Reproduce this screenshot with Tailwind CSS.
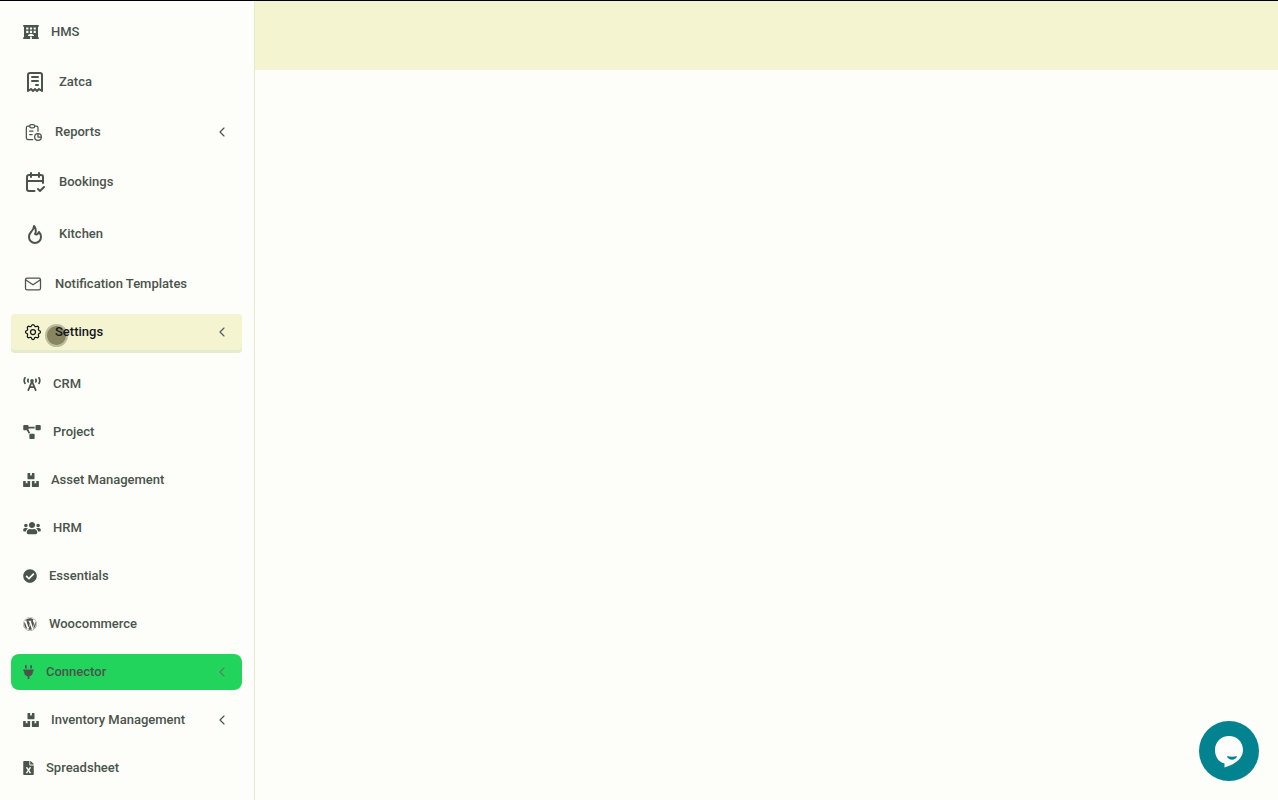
<!DOCTYPE html>
<html lang="en">
<head>
  <meta charset="UTF-8">
  <meta name="viewport" content="width=device-width, initial-scale=1">
  <title>Dashboard</title>
  <script src="https://cdn.jsdelivr.net/npm/@tailwindcss/browser@4"></script>
</head>
<body class="flex min-h-screen border-t border-black bg-[#fdfdf9] font-['Roboto',sans-serif]">
  <!-- Shared icons -->
  <svg class="hidden">
    <symbol id="boxes" viewBox="0 0 576 512"><path d="M560 288h-80v96l-32-21.3-32 21.3v-96h-80c-8.8 0-16 7.2-16 16v192c0 8.8 7.2 16 16 16h224c8.8 0 16-7.2 16-16V304c0-8.8-7.2-16-16-16zm-384-64h224c8.8 0 16-7.2 16-16V16c0-8.8-7.2-16-16-16h-80v96l-32-21.3L256 96V0h-80c-8.8 0-16 7.2-16 16v192c0 8.8 7.2 16 16 16zm64 64h-80v96l-32-21.3L96 384v-96H16c-8.8 0-16 7.2-16 16v192c0 8.8 7.2 16 16 16h224c8.8 0 16-7.2 16-16V304c0-8.8-7.2-16-16-16z"/></symbol>
    <symbol id="chevron" viewBox="0 0 24 24"><path d="M15 6l-6 6 6 6" fill="none" stroke="currentColor" stroke-width="1.75" stroke-linecap="round" stroke-linejoin="round"/></symbol>
  </svg>

  <!-- Sidebar -->
  <aside class="w-[255px] shrink-0 border-r border-[#e4eccb] pt-[13px] pr-3 pb-3 pl-[11px]">
    <nav class="flex flex-col gap-3 text-[13px] leading-5 font-medium text-[#4a544c]">
      <a href="#" class="flex items-center gap-3 rounded-lg px-3 py-2">
        <svg class="h-3.5 w-4" viewBox="0 0 576 512" fill="currentColor" fill-rule="evenodd"><path d="M16 0h544q16 0 16 16v32q0 16-16 16h-16v384h16q16 0 16 16v32q0 16-16 16H320v-80q0-16-16-16h-32q-16 0-16 16v80H16q-16 0-16-16v-32q0-16 16-16h16V64H16Q0 64 0 48V16Q0 0 16 0zM112 88v80h80V88zm136 0v80h80V88zm136 0v80h80V88zM112 208v80h80v-80zm136 0v80h80v-80zm136 0v80h80v-80zM176 400h224c0-50-50-84-112-84s-112 34-112 84z"/></svg>
        <span>HMS</span>
      </a>
      <a href="#" class="flex items-center gap-3 rounded-lg px-3 py-2">
        <svg class="size-6" viewBox="0 0 24 24" fill="none" stroke="currentColor" stroke-width="2" stroke-linecap="round" stroke-linejoin="round"><path d="M5 21V5a2 2 0 0 1 2-2h10a2 2 0 0 1 2 2v16l-3-2-2 2-2-2-2 2-2-2-3 2M9 7h6M9 11h6M13 15h2"/></svg>
        <span>Zatca</span>
      </a>
      <a href="#" class="flex items-center gap-3 rounded-lg px-3 py-2">
        <svg class="size-5" viewBox="0 0 24 24" fill="none" stroke="currentColor" stroke-width="1.5" stroke-linecap="round" stroke-linejoin="round"><path d="M8 5H6a2 2 0 0 0-2 2v12a2 2 0 0 0 2 2h5.7M18 14v4h4M18 11V7a2 2 0 0 0-2-2h-2M8 11h4M8 15h3"/><rect x="8" y="3" width="6" height="4" rx="2"/><circle cx="18" cy="18" r="4"/></svg>
        <span class="grow">Reports</span>
        <svg class="size-4"><use href="#chevron"/></svg>
      </a>
      <a href="#" class="flex items-center gap-3 rounded-lg px-3 py-2">
        <svg class="size-6" viewBox="0 0 24 24" fill="none" stroke="currentColor" stroke-width="2" stroke-linecap="round" stroke-linejoin="round"><path d="M11.5 21H6a2 2 0 0 1-2-2V7a2 2 0 0 1 2-2h12a2 2 0 0 1 2 2v6M16 3v4M8 3v4M4 11h16M15 19l2 2 4-4"/></svg>
        <span>Bookings</span>
      </a>
      <a href="#" class="flex items-center gap-3 rounded-lg px-3 py-2">
        <svg class="size-6" viewBox="0 0 24 24" fill="none" stroke="currentColor" stroke-width="2" stroke-linecap="round" stroke-linejoin="round"><path d="M12 12c2-2.96 0-7-1-8 0 3.038-1.773 4.741-3 6-1.226 1.26-2 3.24-2 5a6 6 0 1 0 12 0c0-1.532-1.056-3.94-2-5-1.786 3-2.791 3-4 2z"/></svg>
        <span>Kitchen</span>
      </a>
      <a href="#" class="flex items-center gap-3 rounded-lg px-3 py-2">
        <svg class="size-5" viewBox="0 0 24 24" fill="none" stroke="currentColor" stroke-width="1.5" stroke-linecap="round" stroke-linejoin="round"><rect x="3" y="5" width="18" height="14" rx="2"/><path d="M3 7l9 6 9-6"/></svg>
        <span>Notification Templates</span>
      </a>
      <a href="#" class="relative mb-1 flex items-center gap-3 rounded-sm bg-[#f4f4d0] px-3 py-2 text-[#14181c] shadow-[0_3px_0_#e6ebcd]">
        <!-- Pointer marker -->
        <span class="absolute top-[10px] left-[34px] size-[23px] rounded-full border-2 border-[#bcbca2] bg-[#888660]"></span>
        <svg class="size-5" viewBox="0 0 24 24" fill="none" stroke="currentColor" stroke-width="1.5" stroke-linecap="round" stroke-linejoin="round"><path d="M10.325 4.317c.426-1.756 2.924-1.756 3.35 0a1.724 1.724 0 0 0 2.573 1.066c1.543-.94 3.31.826 2.37 2.37a1.724 1.724 0 0 0 1.065 2.572c1.756.426 1.756 2.924 0 3.35a1.724 1.724 0 0 0-1.066 2.573c.94 1.543-.826 3.31-2.37 2.37a1.724 1.724 0 0 0-2.572 1.065c-.426 1.756-2.924 1.756-3.35 0a1.724 1.724 0 0 0-2.573-1.066c-1.543.94-3.31-.826-2.37-2.37a1.724 1.724 0 0 0-1.065-2.572c-1.756-.426-1.756-2.924 0-3.35a1.724 1.724 0 0 0 1.066-2.573c-.94-1.543.826-3.31 2.37-2.37 1 .608 2.296.07 2.572-1.065z"/><circle cx="12" cy="12" r="3"/></svg>
        <span class="relative grow">Settings</span>
        <svg class="size-4 text-[#555c62]"><use href="#chevron"/></svg>
      </a>
      <a href="#" class="flex items-center gap-3 rounded-lg px-3 py-2">
        <svg class="h-3.5 w-[18px]" viewBox="0 0 640 512" fill="none" stroke="currentColor" stroke-width="64" stroke-linecap="round" stroke-linejoin="round"><path d="M186 480L320 160l134 320M240 368h160M62 32c-38 70-38 130 0 200M578 32c38 70 38 130 0 200M180 84c-20 36-20 60 0 96M460 84c20 36 20 60 0 96"/><circle cx="320" cy="140" r="34" fill="currentColor"/></svg>
        <span>CRM</span>
      </a>
      <a href="#" class="flex items-center gap-3 rounded-lg px-3 py-2">
        <svg class="h-3.5 w-[18px]" viewBox="0 0 640 512" fill="currentColor"><path d="M384 320H256c-17.67 0-32 14.33-32 32v128c0 17.67 14.33 32 32 32h128c17.67 0 32-14.33 32-32V352c0-17.67-14.33-32-32-32zM192 32c0-17.67-14.33-32-32-32H32C14.33 0 0 14.33 0 32v128c0 17.67 14.33 32 32 32h95.72l73.16 128.04C211.98 300.98 232.4 288 256 288h.28L192 175.51V128h224V64H192V32zM608 0H480c-17.67 0-32 14.33-32 32v128c0 17.67 14.33 32 32 32h128c17.67 0 32-14.33 32-32V32c0-17.67-14.33-32-32-32z"/></svg>
        <span>Project</span>
      </a>
      <a href="#" class="flex items-center gap-3 rounded-lg px-3 py-2">
        <svg class="h-3.5 w-4 fill-current"><use href="#boxes"/></svg>
        <span>Asset Management</span>
      </a>
      <a href="#" class="flex items-center gap-3 rounded-lg px-3 py-2">
        <svg class="h-3.5 w-[18px]" viewBox="0 0 640 512" fill="currentColor"><path d="M96 224c35.3 0 64-28.7 64-64s-28.7-64-64-64-64 28.7-64 64 28.7 64 64 64zm448 0c35.3 0 64-28.7 64-64s-28.7-64-64-64-64 28.7-64 64 28.7 64 64 64zm32 32h-64c-17.6 0-33.5 7.1-45.1 18.6 40.3 22.1 68.9 62 75.1 109.4h66c17.7 0 32-14.3 32-32v-32c0-35.3-28.7-64-64-64zm-256 0c61.9 0 112-50.1 112-112S381.9 32 320 32 208 82.1 208 144s50.1 112 112 112zm76.8 32h-8.3c-20.8 10-43.9 16-68.5 16s-47.6-6-68.5-16h-8.3C179.6 288 128 339.6 128 403.2V432c0 26.5 21.5 48 48 48h288c26.5 0 48-21.5 48-48v-28.8c0-63.6-51.6-115.2-115.2-115.2zm-223.7-13.4C161.5 263.1 145.6 256 128 256H64c-35.3 0-64 28.7-64 64v32c0 17.7 14.3 32 32 32h65.9c6.3-47.4 34.9-87.3 75.2-109.4z"/></svg>
        <span>HRM</span>
      </a>
      <a href="#" class="flex items-center gap-3 rounded-lg px-3 py-2">
        <svg class="size-3.5" viewBox="0 0 512 512" fill="currentColor"><path d="M504 256c0 136.967-111.033 248-248 248S8 392.967 8 256 119.033 8 256 8s248 111.033 248 248zM227.314 387.314l184-184c6.248-6.248 6.248-16.379 0-22.627l-22.627-22.627c-6.248-6.249-16.379-6.249-22.628 0L216 308.118l-70.059-70.059c-6.248-6.248-16.379-6.248-22.628 0l-22.627 22.627c-6.248 6.248-6.248 16.379 0 22.627l104 104c6.249 6.249 16.379 6.249 22.628.001z"/></svg>
        <span>Essentials</span>
      </a>
      <a href="#" class="flex items-center gap-3 rounded-lg px-3 py-2">
        <svg class="size-3.5" viewBox="0 0 512 512" fill="currentColor"><path d="M61.7 169.4l101.5 278C92.2 413 43.3 340.2 43.3 256c0-30.9 6.6-60.1 18.4-86.6zm337.9 75.9c0-26.3-9.4-44.5-17.5-58.7-10.8-17.5-20.9-32.4-20.9-49.9 0-19.6 14.8-37.8 35.7-37.8.9 0 1.8.1 2.8.2-37.9-34.7-88.3-55.9-143.7-55.9-74.3 0-139.7 38.1-177.8 95.9 5 .2 9.7.3 13.7.3 22.2 0 56.7-2.7 56.7-2.7 11.5-.7 12.8 16.2 1.4 17.5 0 0-11.5 1.3-24.3 2l77.5 230.4L249.8 247l-33.1-90.8c-11.5-.7-22.3-2-22.3-2-11.5-.7-10.1-18.2 1.3-17.5 0 0 35.1 2.7 56 2.7 22.2 0 56.7-2.7 56.7-2.7 11.5-.7 12.8 16.2 1.4 17.5 0 0-11.5 1.3-24.3 2l76.9 228.7 21.2-70.9c9-29.4 16-50.5 16-68.7zm-139.9 29.3l-63.8 185.5c19.1 5.6 39.2 8.7 60.1 8.7 24.8 0 48.5-4.3 70.6-12.1-.6-.9-1.1-1.9-1.5-2.9l-65.4-179.2zm183-120.7c.9 6.8 1.4 14 1.4 21.9 0 21.6-4 45.8-16.2 76.2l-65 187.9C426.2 403 468.7 334.5 468.7 256c0-37-9.4-71.8-26-102.1zM504 256c0 136.8-111.3 248-248 248C119.2 504 8 392.7 8 256 8 119.2 119.2 8 256 8c136.7 0 248 111.2 248 248zm-11.4 0c0-130.5-106.2-236.6-236.6-236.6C125.5 19.4 19.4 125.5 19.4 256S125.6 492.6 256 492.6c130.5 0 236.6-106.1 236.6-236.6z"/></svg>
        <span>Woocommerce</span>
      </a>
      <a href="#" class="flex items-center gap-3 rounded-lg bg-[#22d45c] px-3 py-2">
        <svg class="h-3.5 w-[11px]" viewBox="0 0 384 512" fill="currentColor"><path d="M320 32a32 32 0 0 0-64 0v96h64zm48 128H16A16 16 0 0 0 0 176v32a16 16 0 0 0 16 16h16v32a160.07 160.07 0 0 0 128 156.8V512h64v-99.2A160.07 160.07 0 0 0 352 256v-32h16a16 16 0 0 0 16-16v-32a16 16 0 0 0-16-16zM128 32a32 32 0 0 0-64 0v96h64z"/></svg>
        <span class="grow">Connector</span>
        <svg class="size-4 text-[#55806a]"><use href="#chevron"/></svg>
      </a>
      <a href="#" class="flex items-center gap-3 rounded-lg px-3 py-2">
        <svg class="h-3.5 w-4 fill-current"><use href="#boxes"/></svg>
        <span class="grow">Inventory Management</span>
        <svg class="size-4"><use href="#chevron"/></svg>
      </a>
      <a href="#" class="flex items-center gap-3 rounded-lg px-3 py-2">
        <svg class="h-3.5 w-[11px]" viewBox="0 0 384 512" fill="currentColor"><path d="M224 136V0H24C10.7 0 0 10.7 0 24v464c0 13.3 10.7 24 24 24h336c13.3 0 24-10.7 24-24V160H248c-13.2 0-24-10.8-24-24zm60.1 106.5L224 336l60.1 93.5c5.1 8-.6 18.5-10.1 18.5h-34.9c-4.4 0-8.5-2.4-10.6-6.3C208.9 405.5 192 373 192 373c-6.4 14.8-10 20-36.6 68.8-2.1 3.9-6.1 6.3-10.5 6.3H110c-9.5 0-15.2-10.5-10.1-18.5l60.3-93.5-60.3-93.5c-5.2-8 .6-18.5 10.1-18.5h34.8c4.4 0 8.5 2.4 10.6 6.3 26.1 48.8 20 33.6 36.6 68.5 0 0 6.1-11.7 36.6-68.5 2.1-3.9 6.2-6.3 10.6-6.3H274c9.5-.1 15.2 10.4 10.1 18.4zM384 121.9v6.1H256V0h6.1c6.4 0 12.5 2.5 17 7l97.9 98c4.5 4.5 7 10.6 7 16.9z"/></svg>
        <span>Spreadsheet</span>
      </a>
    </nav>
  </aside>

  <main class="min-w-0 grow">
    <header class="h-[69px] bg-[#f4f4d0]"></header>
  </main>

  <!-- Chat button -->
  <button type="button" aria-label="Open chat" class="fixed right-[19px] bottom-[19px] size-[60px] rounded-full bg-[#03838f]">
    <svg class="size-[60px]" viewBox="0 0 60 60"><path d="M30 15c8 0 14 6 14 14 0 8-7 14-18.500 17.500v-4C19 41 16 35 16 29c0-8 6-14 14-14z" fill="#fdfdfd"/><path d="M28 35c3 1 7 1 10 0-1 5-9 5-10 0z" fill="#03838f"/></svg>
  </button>
</body>
</html>
